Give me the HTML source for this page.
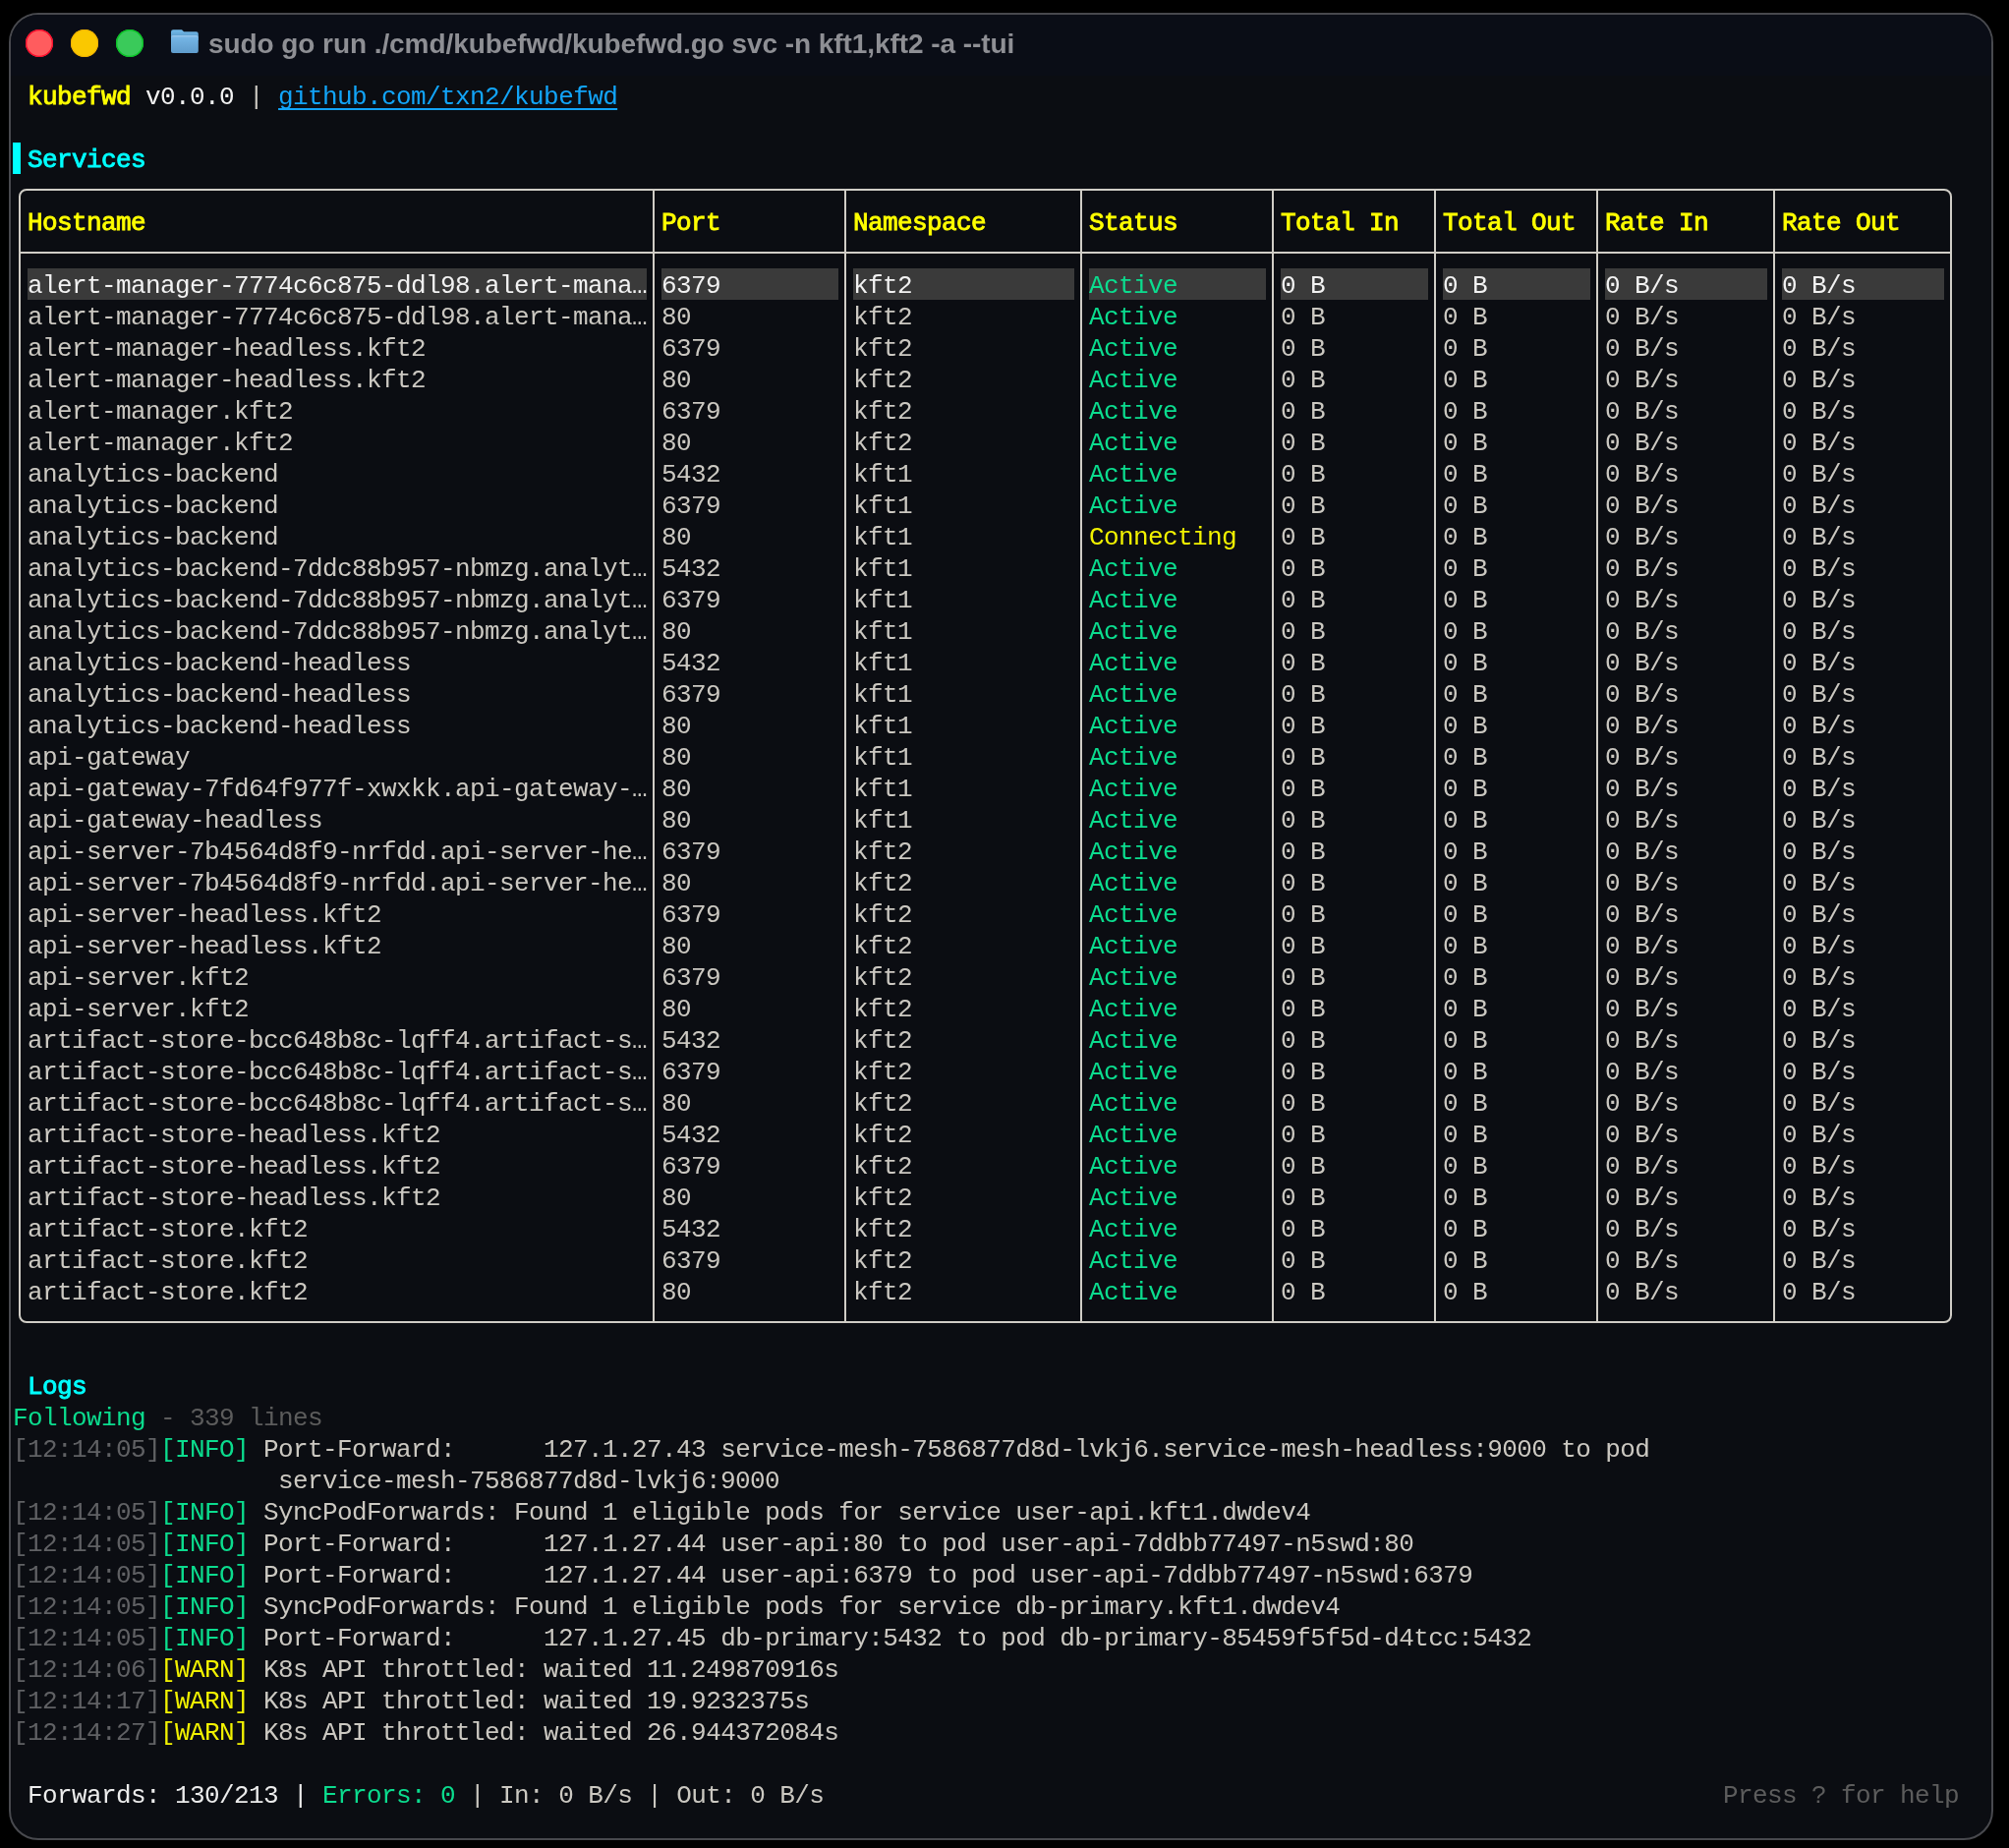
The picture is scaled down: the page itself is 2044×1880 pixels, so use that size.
<!DOCTYPE html>
<html><head><meta charset="utf-8">
<style>
html,body{margin:0;padding:0;background:#000;width:2044px;height:1880px;overflow:hidden}
#win{position:absolute;left:9px;top:13px;width:2015px;height:1855px;border:2px solid #48494e;border-radius:30px;background:#0b0d12;overflow:hidden}
#tb{position:absolute;left:0;top:0;width:100%;height:62px;background:#0a0d16}
.dot{position:absolute;width:28px;height:28px;border-radius:50%;top:15px}
#title{position:absolute;left:201px;top:15px;will-change:transform;letter-spacing:-0.07px;font-family:"Liberation Sans",sans-serif;font-weight:bold;font-size:28px;line-height:30px;color:#8e8f94;white-space:pre}
#term{position:absolute;left:-11px;top:-15px;width:2044px;height:1880px;will-change:transform}
.t{position:absolute;font-family:"Liberation Mono",monospace;font-size:26px;letter-spacing:-0.6px;line-height:32px;height:32px;white-space:pre;padding-top:2px;box-sizing:border-box;color:#cbc8c1}
.t span{}
.lnk{color:#12a4f8;text-decoration:underline;text-decoration-thickness:2px;text-underline-offset:4px;text-decoration-skip-ink:none}
.bar{position:absolute;width:8px;height:32px;background:#00ffff}
.hl{position:absolute;height:32px;background:#3a3a3a}
.box{position:absolute;border:2px solid #d0cdc6;border-radius:8px;box-sizing:content-box}
.hz{position:absolute;height:2px;background:#d0cdc6}
.vt{position:absolute;width:2px;background:#d0cdc6}
</style></head><body>
<div id="win">
<div id="tb"></div>
<div class="dot" style="left:15px;background:#ff5c5e;box-shadow:inset 0 0 0 1.3px #ff0a2a"></div>
<div class="dot" style="left:61px;background:#fac800;box-shadow:inset 0 0 0 1px #f0b000"></div>
<div class="dot" style="left:107px;background:#3aca5a;box-shadow:inset 0 0 0 1.3px #08c424"></div>
<svg style="position:absolute;left:162px;top:14px" width="30" height="26" viewBox="0 0 30 26">
<defs><linearGradient id="fg1" x1="0" y1="0" x2="0" y2="1"><stop offset="0" stop-color="#9cc8ec"/><stop offset="0.15" stop-color="#74b4e4"/><stop offset="1" stop-color="#5f9ccc"/></linearGradient>
<linearGradient id="bg1" x1="0" y1="0" x2="0" y2="1"><stop offset="0" stop-color="#74bcec"/><stop offset="1" stop-color="#4f8cba"/></linearGradient></defs>
<path d="M1 3.5 Q1 1.3 3.2 1.3 L12 1.3 L14 3.3 L26.6 3.3 Q28.8 3.3 28.8 5.5 L28.8 12 L1 12 Z" fill="url(#bg1)"/>
<path d="M1 9 Q1 7 3 7 L26.8 7 Q28.8 7 28.8 9 L28.8 23 Q28.8 25 26.8 25 L3 25 Q1 25 1 23 Z" fill="url(#fg1)"/>
</svg>
<div id="title">sudo go run ./cmd/kubefwd/kubefwd.go svc -n kft1,kft2 -a --tui</div>
<div id="term">
<div class="t" style="top:81px;left:28px"><span style="color:#ffff00;font-weight:normal;-webkit-text-stroke:0.9px #ffff00">kubefwd</span><span style="color:#f2f2f2"> v0.0.0 </span><span style="color:#cbc8c1">| </span><span class="lnk">github.com/txn2/kubefwd</span></div>
<div class="bar" style="top:145px;left:13px"></div>
<div class="t" style="top:145px;left:28px"><span style="color:#00ffff;font-weight:normal;-webkit-text-stroke:0.9px #00ffff">Services</span></div>
<div class="t" style="top:209px;left:28px"><span style="color:#ffff00;font-weight:normal;-webkit-text-stroke:0.9px #ffff00">Hostname</span></div>
<div class="t" style="top:209px;left:673px"><span style="color:#ffff00;font-weight:normal;-webkit-text-stroke:0.9px #ffff00">Port</span></div>
<div class="t" style="top:209px;left:868px"><span style="color:#ffff00;font-weight:normal;-webkit-text-stroke:0.9px #ffff00">Namespace</span></div>
<div class="t" style="top:209px;left:1108px"><span style="color:#ffff00;font-weight:normal;-webkit-text-stroke:0.9px #ffff00">Status</span></div>
<div class="t" style="top:209px;left:1303px"><span style="color:#ffff00;font-weight:normal;-webkit-text-stroke:0.9px #ffff00">Total In</span></div>
<div class="t" style="top:209px;left:1468px"><span style="color:#ffff00;font-weight:normal;-webkit-text-stroke:0.9px #ffff00">Total Out</span></div>
<div class="t" style="top:209px;left:1633px"><span style="color:#ffff00;font-weight:normal;-webkit-text-stroke:0.9px #ffff00">Rate In</span></div>
<div class="t" style="top:209px;left:1813px"><span style="color:#ffff00;font-weight:normal;-webkit-text-stroke:0.9px #ffff00">Rate Out</span></div>
<div class="hl" style="top:273px;left:28px;width:630px"></div>
<div class="t" style="top:273px;left:28px"><span style="color:#f2f2f2">alert-manager-7774c6c875-ddl98.alert-mana…</span></div>
<div class="hl" style="top:273px;left:673px;width:180px"></div>
<div class="t" style="top:273px;left:673px"><span style="color:#f2f2f2">6379</span></div>
<div class="hl" style="top:273px;left:868px;width:225px"></div>
<div class="t" style="top:273px;left:868px"><span style="color:#f2f2f2">kft2</span></div>
<div class="hl" style="top:273px;left:1108px;width:180px"></div>
<div class="t" style="top:273px;left:1108px"><span style="color:#0bdc8e">Active</span></div>
<div class="hl" style="top:273px;left:1303px;width:150px"></div>
<div class="t" style="top:273px;left:1303px"><span style="color:#f2f2f2">0 B</span></div>
<div class="hl" style="top:273px;left:1468px;width:150px"></div>
<div class="t" style="top:273px;left:1468px"><span style="color:#f2f2f2">0 B</span></div>
<div class="hl" style="top:273px;left:1633px;width:165px"></div>
<div class="t" style="top:273px;left:1633px"><span style="color:#f2f2f2">0 B/s</span></div>
<div class="hl" style="top:273px;left:1813px;width:165px"></div>
<div class="t" style="top:273px;left:1813px"><span style="color:#f2f2f2">0 B/s</span></div>
<div class="t" style="top:305px;left:28px"><span style="color:#cbc8c1">alert-manager-7774c6c875-ddl98.alert-mana…</span></div>
<div class="t" style="top:305px;left:673px"><span style="color:#cbc8c1">80</span></div>
<div class="t" style="top:305px;left:868px"><span style="color:#cbc8c1">kft2</span></div>
<div class="t" style="top:305px;left:1108px"><span style="color:#0bdc8e">Active</span></div>
<div class="t" style="top:305px;left:1303px"><span style="color:#cbc8c1">0 B</span></div>
<div class="t" style="top:305px;left:1468px"><span style="color:#cbc8c1">0 B</span></div>
<div class="t" style="top:305px;left:1633px"><span style="color:#cbc8c1">0 B/s</span></div>
<div class="t" style="top:305px;left:1813px"><span style="color:#cbc8c1">0 B/s</span></div>
<div class="t" style="top:337px;left:28px"><span style="color:#cbc8c1">alert-manager-headless.kft2</span></div>
<div class="t" style="top:337px;left:673px"><span style="color:#cbc8c1">6379</span></div>
<div class="t" style="top:337px;left:868px"><span style="color:#cbc8c1">kft2</span></div>
<div class="t" style="top:337px;left:1108px"><span style="color:#0bdc8e">Active</span></div>
<div class="t" style="top:337px;left:1303px"><span style="color:#cbc8c1">0 B</span></div>
<div class="t" style="top:337px;left:1468px"><span style="color:#cbc8c1">0 B</span></div>
<div class="t" style="top:337px;left:1633px"><span style="color:#cbc8c1">0 B/s</span></div>
<div class="t" style="top:337px;left:1813px"><span style="color:#cbc8c1">0 B/s</span></div>
<div class="t" style="top:369px;left:28px"><span style="color:#cbc8c1">alert-manager-headless.kft2</span></div>
<div class="t" style="top:369px;left:673px"><span style="color:#cbc8c1">80</span></div>
<div class="t" style="top:369px;left:868px"><span style="color:#cbc8c1">kft2</span></div>
<div class="t" style="top:369px;left:1108px"><span style="color:#0bdc8e">Active</span></div>
<div class="t" style="top:369px;left:1303px"><span style="color:#cbc8c1">0 B</span></div>
<div class="t" style="top:369px;left:1468px"><span style="color:#cbc8c1">0 B</span></div>
<div class="t" style="top:369px;left:1633px"><span style="color:#cbc8c1">0 B/s</span></div>
<div class="t" style="top:369px;left:1813px"><span style="color:#cbc8c1">0 B/s</span></div>
<div class="t" style="top:401px;left:28px"><span style="color:#cbc8c1">alert-manager.kft2</span></div>
<div class="t" style="top:401px;left:673px"><span style="color:#cbc8c1">6379</span></div>
<div class="t" style="top:401px;left:868px"><span style="color:#cbc8c1">kft2</span></div>
<div class="t" style="top:401px;left:1108px"><span style="color:#0bdc8e">Active</span></div>
<div class="t" style="top:401px;left:1303px"><span style="color:#cbc8c1">0 B</span></div>
<div class="t" style="top:401px;left:1468px"><span style="color:#cbc8c1">0 B</span></div>
<div class="t" style="top:401px;left:1633px"><span style="color:#cbc8c1">0 B/s</span></div>
<div class="t" style="top:401px;left:1813px"><span style="color:#cbc8c1">0 B/s</span></div>
<div class="t" style="top:433px;left:28px"><span style="color:#cbc8c1">alert-manager.kft2</span></div>
<div class="t" style="top:433px;left:673px"><span style="color:#cbc8c1">80</span></div>
<div class="t" style="top:433px;left:868px"><span style="color:#cbc8c1">kft2</span></div>
<div class="t" style="top:433px;left:1108px"><span style="color:#0bdc8e">Active</span></div>
<div class="t" style="top:433px;left:1303px"><span style="color:#cbc8c1">0 B</span></div>
<div class="t" style="top:433px;left:1468px"><span style="color:#cbc8c1">0 B</span></div>
<div class="t" style="top:433px;left:1633px"><span style="color:#cbc8c1">0 B/s</span></div>
<div class="t" style="top:433px;left:1813px"><span style="color:#cbc8c1">0 B/s</span></div>
<div class="t" style="top:465px;left:28px"><span style="color:#cbc8c1">analytics-backend</span></div>
<div class="t" style="top:465px;left:673px"><span style="color:#cbc8c1">5432</span></div>
<div class="t" style="top:465px;left:868px"><span style="color:#cbc8c1">kft1</span></div>
<div class="t" style="top:465px;left:1108px"><span style="color:#0bdc8e">Active</span></div>
<div class="t" style="top:465px;left:1303px"><span style="color:#cbc8c1">0 B</span></div>
<div class="t" style="top:465px;left:1468px"><span style="color:#cbc8c1">0 B</span></div>
<div class="t" style="top:465px;left:1633px"><span style="color:#cbc8c1">0 B/s</span></div>
<div class="t" style="top:465px;left:1813px"><span style="color:#cbc8c1">0 B/s</span></div>
<div class="t" style="top:497px;left:28px"><span style="color:#cbc8c1">analytics-backend</span></div>
<div class="t" style="top:497px;left:673px"><span style="color:#cbc8c1">6379</span></div>
<div class="t" style="top:497px;left:868px"><span style="color:#cbc8c1">kft1</span></div>
<div class="t" style="top:497px;left:1108px"><span style="color:#0bdc8e">Active</span></div>
<div class="t" style="top:497px;left:1303px"><span style="color:#cbc8c1">0 B</span></div>
<div class="t" style="top:497px;left:1468px"><span style="color:#cbc8c1">0 B</span></div>
<div class="t" style="top:497px;left:1633px"><span style="color:#cbc8c1">0 B/s</span></div>
<div class="t" style="top:497px;left:1813px"><span style="color:#cbc8c1">0 B/s</span></div>
<div class="t" style="top:529px;left:28px"><span style="color:#cbc8c1">analytics-backend</span></div>
<div class="t" style="top:529px;left:673px"><span style="color:#cbc8c1">80</span></div>
<div class="t" style="top:529px;left:868px"><span style="color:#cbc8c1">kft1</span></div>
<div class="t" style="top:529px;left:1108px"><span style="color:#f2f200">Connecting</span></div>
<div class="t" style="top:529px;left:1303px"><span style="color:#cbc8c1">0 B</span></div>
<div class="t" style="top:529px;left:1468px"><span style="color:#cbc8c1">0 B</span></div>
<div class="t" style="top:529px;left:1633px"><span style="color:#cbc8c1">0 B/s</span></div>
<div class="t" style="top:529px;left:1813px"><span style="color:#cbc8c1">0 B/s</span></div>
<div class="t" style="top:561px;left:28px"><span style="color:#cbc8c1">analytics-backend-7ddc88b957-nbmzg.analyt…</span></div>
<div class="t" style="top:561px;left:673px"><span style="color:#cbc8c1">5432</span></div>
<div class="t" style="top:561px;left:868px"><span style="color:#cbc8c1">kft1</span></div>
<div class="t" style="top:561px;left:1108px"><span style="color:#0bdc8e">Active</span></div>
<div class="t" style="top:561px;left:1303px"><span style="color:#cbc8c1">0 B</span></div>
<div class="t" style="top:561px;left:1468px"><span style="color:#cbc8c1">0 B</span></div>
<div class="t" style="top:561px;left:1633px"><span style="color:#cbc8c1">0 B/s</span></div>
<div class="t" style="top:561px;left:1813px"><span style="color:#cbc8c1">0 B/s</span></div>
<div class="t" style="top:593px;left:28px"><span style="color:#cbc8c1">analytics-backend-7ddc88b957-nbmzg.analyt…</span></div>
<div class="t" style="top:593px;left:673px"><span style="color:#cbc8c1">6379</span></div>
<div class="t" style="top:593px;left:868px"><span style="color:#cbc8c1">kft1</span></div>
<div class="t" style="top:593px;left:1108px"><span style="color:#0bdc8e">Active</span></div>
<div class="t" style="top:593px;left:1303px"><span style="color:#cbc8c1">0 B</span></div>
<div class="t" style="top:593px;left:1468px"><span style="color:#cbc8c1">0 B</span></div>
<div class="t" style="top:593px;left:1633px"><span style="color:#cbc8c1">0 B/s</span></div>
<div class="t" style="top:593px;left:1813px"><span style="color:#cbc8c1">0 B/s</span></div>
<div class="t" style="top:625px;left:28px"><span style="color:#cbc8c1">analytics-backend-7ddc88b957-nbmzg.analyt…</span></div>
<div class="t" style="top:625px;left:673px"><span style="color:#cbc8c1">80</span></div>
<div class="t" style="top:625px;left:868px"><span style="color:#cbc8c1">kft1</span></div>
<div class="t" style="top:625px;left:1108px"><span style="color:#0bdc8e">Active</span></div>
<div class="t" style="top:625px;left:1303px"><span style="color:#cbc8c1">0 B</span></div>
<div class="t" style="top:625px;left:1468px"><span style="color:#cbc8c1">0 B</span></div>
<div class="t" style="top:625px;left:1633px"><span style="color:#cbc8c1">0 B/s</span></div>
<div class="t" style="top:625px;left:1813px"><span style="color:#cbc8c1">0 B/s</span></div>
<div class="t" style="top:657px;left:28px"><span style="color:#cbc8c1">analytics-backend-headless</span></div>
<div class="t" style="top:657px;left:673px"><span style="color:#cbc8c1">5432</span></div>
<div class="t" style="top:657px;left:868px"><span style="color:#cbc8c1">kft1</span></div>
<div class="t" style="top:657px;left:1108px"><span style="color:#0bdc8e">Active</span></div>
<div class="t" style="top:657px;left:1303px"><span style="color:#cbc8c1">0 B</span></div>
<div class="t" style="top:657px;left:1468px"><span style="color:#cbc8c1">0 B</span></div>
<div class="t" style="top:657px;left:1633px"><span style="color:#cbc8c1">0 B/s</span></div>
<div class="t" style="top:657px;left:1813px"><span style="color:#cbc8c1">0 B/s</span></div>
<div class="t" style="top:689px;left:28px"><span style="color:#cbc8c1">analytics-backend-headless</span></div>
<div class="t" style="top:689px;left:673px"><span style="color:#cbc8c1">6379</span></div>
<div class="t" style="top:689px;left:868px"><span style="color:#cbc8c1">kft1</span></div>
<div class="t" style="top:689px;left:1108px"><span style="color:#0bdc8e">Active</span></div>
<div class="t" style="top:689px;left:1303px"><span style="color:#cbc8c1">0 B</span></div>
<div class="t" style="top:689px;left:1468px"><span style="color:#cbc8c1">0 B</span></div>
<div class="t" style="top:689px;left:1633px"><span style="color:#cbc8c1">0 B/s</span></div>
<div class="t" style="top:689px;left:1813px"><span style="color:#cbc8c1">0 B/s</span></div>
<div class="t" style="top:721px;left:28px"><span style="color:#cbc8c1">analytics-backend-headless</span></div>
<div class="t" style="top:721px;left:673px"><span style="color:#cbc8c1">80</span></div>
<div class="t" style="top:721px;left:868px"><span style="color:#cbc8c1">kft1</span></div>
<div class="t" style="top:721px;left:1108px"><span style="color:#0bdc8e">Active</span></div>
<div class="t" style="top:721px;left:1303px"><span style="color:#cbc8c1">0 B</span></div>
<div class="t" style="top:721px;left:1468px"><span style="color:#cbc8c1">0 B</span></div>
<div class="t" style="top:721px;left:1633px"><span style="color:#cbc8c1">0 B/s</span></div>
<div class="t" style="top:721px;left:1813px"><span style="color:#cbc8c1">0 B/s</span></div>
<div class="t" style="top:753px;left:28px"><span style="color:#cbc8c1">api-gateway</span></div>
<div class="t" style="top:753px;left:673px"><span style="color:#cbc8c1">80</span></div>
<div class="t" style="top:753px;left:868px"><span style="color:#cbc8c1">kft1</span></div>
<div class="t" style="top:753px;left:1108px"><span style="color:#0bdc8e">Active</span></div>
<div class="t" style="top:753px;left:1303px"><span style="color:#cbc8c1">0 B</span></div>
<div class="t" style="top:753px;left:1468px"><span style="color:#cbc8c1">0 B</span></div>
<div class="t" style="top:753px;left:1633px"><span style="color:#cbc8c1">0 B/s</span></div>
<div class="t" style="top:753px;left:1813px"><span style="color:#cbc8c1">0 B/s</span></div>
<div class="t" style="top:785px;left:28px"><span style="color:#cbc8c1">api-gateway-7fd64f977f-xwxkk.api-gateway-…</span></div>
<div class="t" style="top:785px;left:673px"><span style="color:#cbc8c1">80</span></div>
<div class="t" style="top:785px;left:868px"><span style="color:#cbc8c1">kft1</span></div>
<div class="t" style="top:785px;left:1108px"><span style="color:#0bdc8e">Active</span></div>
<div class="t" style="top:785px;left:1303px"><span style="color:#cbc8c1">0 B</span></div>
<div class="t" style="top:785px;left:1468px"><span style="color:#cbc8c1">0 B</span></div>
<div class="t" style="top:785px;left:1633px"><span style="color:#cbc8c1">0 B/s</span></div>
<div class="t" style="top:785px;left:1813px"><span style="color:#cbc8c1">0 B/s</span></div>
<div class="t" style="top:817px;left:28px"><span style="color:#cbc8c1">api-gateway-headless</span></div>
<div class="t" style="top:817px;left:673px"><span style="color:#cbc8c1">80</span></div>
<div class="t" style="top:817px;left:868px"><span style="color:#cbc8c1">kft1</span></div>
<div class="t" style="top:817px;left:1108px"><span style="color:#0bdc8e">Active</span></div>
<div class="t" style="top:817px;left:1303px"><span style="color:#cbc8c1">0 B</span></div>
<div class="t" style="top:817px;left:1468px"><span style="color:#cbc8c1">0 B</span></div>
<div class="t" style="top:817px;left:1633px"><span style="color:#cbc8c1">0 B/s</span></div>
<div class="t" style="top:817px;left:1813px"><span style="color:#cbc8c1">0 B/s</span></div>
<div class="t" style="top:849px;left:28px"><span style="color:#cbc8c1">api-server-7b4564d8f9-nrfdd.api-server-he…</span></div>
<div class="t" style="top:849px;left:673px"><span style="color:#cbc8c1">6379</span></div>
<div class="t" style="top:849px;left:868px"><span style="color:#cbc8c1">kft2</span></div>
<div class="t" style="top:849px;left:1108px"><span style="color:#0bdc8e">Active</span></div>
<div class="t" style="top:849px;left:1303px"><span style="color:#cbc8c1">0 B</span></div>
<div class="t" style="top:849px;left:1468px"><span style="color:#cbc8c1">0 B</span></div>
<div class="t" style="top:849px;left:1633px"><span style="color:#cbc8c1">0 B/s</span></div>
<div class="t" style="top:849px;left:1813px"><span style="color:#cbc8c1">0 B/s</span></div>
<div class="t" style="top:881px;left:28px"><span style="color:#cbc8c1">api-server-7b4564d8f9-nrfdd.api-server-he…</span></div>
<div class="t" style="top:881px;left:673px"><span style="color:#cbc8c1">80</span></div>
<div class="t" style="top:881px;left:868px"><span style="color:#cbc8c1">kft2</span></div>
<div class="t" style="top:881px;left:1108px"><span style="color:#0bdc8e">Active</span></div>
<div class="t" style="top:881px;left:1303px"><span style="color:#cbc8c1">0 B</span></div>
<div class="t" style="top:881px;left:1468px"><span style="color:#cbc8c1">0 B</span></div>
<div class="t" style="top:881px;left:1633px"><span style="color:#cbc8c1">0 B/s</span></div>
<div class="t" style="top:881px;left:1813px"><span style="color:#cbc8c1">0 B/s</span></div>
<div class="t" style="top:913px;left:28px"><span style="color:#cbc8c1">api-server-headless.kft2</span></div>
<div class="t" style="top:913px;left:673px"><span style="color:#cbc8c1">6379</span></div>
<div class="t" style="top:913px;left:868px"><span style="color:#cbc8c1">kft2</span></div>
<div class="t" style="top:913px;left:1108px"><span style="color:#0bdc8e">Active</span></div>
<div class="t" style="top:913px;left:1303px"><span style="color:#cbc8c1">0 B</span></div>
<div class="t" style="top:913px;left:1468px"><span style="color:#cbc8c1">0 B</span></div>
<div class="t" style="top:913px;left:1633px"><span style="color:#cbc8c1">0 B/s</span></div>
<div class="t" style="top:913px;left:1813px"><span style="color:#cbc8c1">0 B/s</span></div>
<div class="t" style="top:945px;left:28px"><span style="color:#cbc8c1">api-server-headless.kft2</span></div>
<div class="t" style="top:945px;left:673px"><span style="color:#cbc8c1">80</span></div>
<div class="t" style="top:945px;left:868px"><span style="color:#cbc8c1">kft2</span></div>
<div class="t" style="top:945px;left:1108px"><span style="color:#0bdc8e">Active</span></div>
<div class="t" style="top:945px;left:1303px"><span style="color:#cbc8c1">0 B</span></div>
<div class="t" style="top:945px;left:1468px"><span style="color:#cbc8c1">0 B</span></div>
<div class="t" style="top:945px;left:1633px"><span style="color:#cbc8c1">0 B/s</span></div>
<div class="t" style="top:945px;left:1813px"><span style="color:#cbc8c1">0 B/s</span></div>
<div class="t" style="top:977px;left:28px"><span style="color:#cbc8c1">api-server.kft2</span></div>
<div class="t" style="top:977px;left:673px"><span style="color:#cbc8c1">6379</span></div>
<div class="t" style="top:977px;left:868px"><span style="color:#cbc8c1">kft2</span></div>
<div class="t" style="top:977px;left:1108px"><span style="color:#0bdc8e">Active</span></div>
<div class="t" style="top:977px;left:1303px"><span style="color:#cbc8c1">0 B</span></div>
<div class="t" style="top:977px;left:1468px"><span style="color:#cbc8c1">0 B</span></div>
<div class="t" style="top:977px;left:1633px"><span style="color:#cbc8c1">0 B/s</span></div>
<div class="t" style="top:977px;left:1813px"><span style="color:#cbc8c1">0 B/s</span></div>
<div class="t" style="top:1009px;left:28px"><span style="color:#cbc8c1">api-server.kft2</span></div>
<div class="t" style="top:1009px;left:673px"><span style="color:#cbc8c1">80</span></div>
<div class="t" style="top:1009px;left:868px"><span style="color:#cbc8c1">kft2</span></div>
<div class="t" style="top:1009px;left:1108px"><span style="color:#0bdc8e">Active</span></div>
<div class="t" style="top:1009px;left:1303px"><span style="color:#cbc8c1">0 B</span></div>
<div class="t" style="top:1009px;left:1468px"><span style="color:#cbc8c1">0 B</span></div>
<div class="t" style="top:1009px;left:1633px"><span style="color:#cbc8c1">0 B/s</span></div>
<div class="t" style="top:1009px;left:1813px"><span style="color:#cbc8c1">0 B/s</span></div>
<div class="t" style="top:1041px;left:28px"><span style="color:#cbc8c1">artifact-store-bcc648b8c-lqff4.artifact-s…</span></div>
<div class="t" style="top:1041px;left:673px"><span style="color:#cbc8c1">5432</span></div>
<div class="t" style="top:1041px;left:868px"><span style="color:#cbc8c1">kft2</span></div>
<div class="t" style="top:1041px;left:1108px"><span style="color:#0bdc8e">Active</span></div>
<div class="t" style="top:1041px;left:1303px"><span style="color:#cbc8c1">0 B</span></div>
<div class="t" style="top:1041px;left:1468px"><span style="color:#cbc8c1">0 B</span></div>
<div class="t" style="top:1041px;left:1633px"><span style="color:#cbc8c1">0 B/s</span></div>
<div class="t" style="top:1041px;left:1813px"><span style="color:#cbc8c1">0 B/s</span></div>
<div class="t" style="top:1073px;left:28px"><span style="color:#cbc8c1">artifact-store-bcc648b8c-lqff4.artifact-s…</span></div>
<div class="t" style="top:1073px;left:673px"><span style="color:#cbc8c1">6379</span></div>
<div class="t" style="top:1073px;left:868px"><span style="color:#cbc8c1">kft2</span></div>
<div class="t" style="top:1073px;left:1108px"><span style="color:#0bdc8e">Active</span></div>
<div class="t" style="top:1073px;left:1303px"><span style="color:#cbc8c1">0 B</span></div>
<div class="t" style="top:1073px;left:1468px"><span style="color:#cbc8c1">0 B</span></div>
<div class="t" style="top:1073px;left:1633px"><span style="color:#cbc8c1">0 B/s</span></div>
<div class="t" style="top:1073px;left:1813px"><span style="color:#cbc8c1">0 B/s</span></div>
<div class="t" style="top:1105px;left:28px"><span style="color:#cbc8c1">artifact-store-bcc648b8c-lqff4.artifact-s…</span></div>
<div class="t" style="top:1105px;left:673px"><span style="color:#cbc8c1">80</span></div>
<div class="t" style="top:1105px;left:868px"><span style="color:#cbc8c1">kft2</span></div>
<div class="t" style="top:1105px;left:1108px"><span style="color:#0bdc8e">Active</span></div>
<div class="t" style="top:1105px;left:1303px"><span style="color:#cbc8c1">0 B</span></div>
<div class="t" style="top:1105px;left:1468px"><span style="color:#cbc8c1">0 B</span></div>
<div class="t" style="top:1105px;left:1633px"><span style="color:#cbc8c1">0 B/s</span></div>
<div class="t" style="top:1105px;left:1813px"><span style="color:#cbc8c1">0 B/s</span></div>
<div class="t" style="top:1137px;left:28px"><span style="color:#cbc8c1">artifact-store-headless.kft2</span></div>
<div class="t" style="top:1137px;left:673px"><span style="color:#cbc8c1">5432</span></div>
<div class="t" style="top:1137px;left:868px"><span style="color:#cbc8c1">kft2</span></div>
<div class="t" style="top:1137px;left:1108px"><span style="color:#0bdc8e">Active</span></div>
<div class="t" style="top:1137px;left:1303px"><span style="color:#cbc8c1">0 B</span></div>
<div class="t" style="top:1137px;left:1468px"><span style="color:#cbc8c1">0 B</span></div>
<div class="t" style="top:1137px;left:1633px"><span style="color:#cbc8c1">0 B/s</span></div>
<div class="t" style="top:1137px;left:1813px"><span style="color:#cbc8c1">0 B/s</span></div>
<div class="t" style="top:1169px;left:28px"><span style="color:#cbc8c1">artifact-store-headless.kft2</span></div>
<div class="t" style="top:1169px;left:673px"><span style="color:#cbc8c1">6379</span></div>
<div class="t" style="top:1169px;left:868px"><span style="color:#cbc8c1">kft2</span></div>
<div class="t" style="top:1169px;left:1108px"><span style="color:#0bdc8e">Active</span></div>
<div class="t" style="top:1169px;left:1303px"><span style="color:#cbc8c1">0 B</span></div>
<div class="t" style="top:1169px;left:1468px"><span style="color:#cbc8c1">0 B</span></div>
<div class="t" style="top:1169px;left:1633px"><span style="color:#cbc8c1">0 B/s</span></div>
<div class="t" style="top:1169px;left:1813px"><span style="color:#cbc8c1">0 B/s</span></div>
<div class="t" style="top:1201px;left:28px"><span style="color:#cbc8c1">artifact-store-headless.kft2</span></div>
<div class="t" style="top:1201px;left:673px"><span style="color:#cbc8c1">80</span></div>
<div class="t" style="top:1201px;left:868px"><span style="color:#cbc8c1">kft2</span></div>
<div class="t" style="top:1201px;left:1108px"><span style="color:#0bdc8e">Active</span></div>
<div class="t" style="top:1201px;left:1303px"><span style="color:#cbc8c1">0 B</span></div>
<div class="t" style="top:1201px;left:1468px"><span style="color:#cbc8c1">0 B</span></div>
<div class="t" style="top:1201px;left:1633px"><span style="color:#cbc8c1">0 B/s</span></div>
<div class="t" style="top:1201px;left:1813px"><span style="color:#cbc8c1">0 B/s</span></div>
<div class="t" style="top:1233px;left:28px"><span style="color:#cbc8c1">artifact-store.kft2</span></div>
<div class="t" style="top:1233px;left:673px"><span style="color:#cbc8c1">5432</span></div>
<div class="t" style="top:1233px;left:868px"><span style="color:#cbc8c1">kft2</span></div>
<div class="t" style="top:1233px;left:1108px"><span style="color:#0bdc8e">Active</span></div>
<div class="t" style="top:1233px;left:1303px"><span style="color:#cbc8c1">0 B</span></div>
<div class="t" style="top:1233px;left:1468px"><span style="color:#cbc8c1">0 B</span></div>
<div class="t" style="top:1233px;left:1633px"><span style="color:#cbc8c1">0 B/s</span></div>
<div class="t" style="top:1233px;left:1813px"><span style="color:#cbc8c1">0 B/s</span></div>
<div class="t" style="top:1265px;left:28px"><span style="color:#cbc8c1">artifact-store.kft2</span></div>
<div class="t" style="top:1265px;left:673px"><span style="color:#cbc8c1">6379</span></div>
<div class="t" style="top:1265px;left:868px"><span style="color:#cbc8c1">kft2</span></div>
<div class="t" style="top:1265px;left:1108px"><span style="color:#0bdc8e">Active</span></div>
<div class="t" style="top:1265px;left:1303px"><span style="color:#cbc8c1">0 B</span></div>
<div class="t" style="top:1265px;left:1468px"><span style="color:#cbc8c1">0 B</span></div>
<div class="t" style="top:1265px;left:1633px"><span style="color:#cbc8c1">0 B/s</span></div>
<div class="t" style="top:1265px;left:1813px"><span style="color:#cbc8c1">0 B/s</span></div>
<div class="t" style="top:1297px;left:28px"><span style="color:#cbc8c1">artifact-store.kft2</span></div>
<div class="t" style="top:1297px;left:673px"><span style="color:#cbc8c1">80</span></div>
<div class="t" style="top:1297px;left:868px"><span style="color:#cbc8c1">kft2</span></div>
<div class="t" style="top:1297px;left:1108px"><span style="color:#0bdc8e">Active</span></div>
<div class="t" style="top:1297px;left:1303px"><span style="color:#cbc8c1">0 B</span></div>
<div class="t" style="top:1297px;left:1468px"><span style="color:#cbc8c1">0 B</span></div>
<div class="t" style="top:1297px;left:1633px"><span style="color:#cbc8c1">0 B/s</span></div>
<div class="t" style="top:1297px;left:1813px"><span style="color:#cbc8c1">0 B/s</span></div>
<div class="box" style="left:19px;top:192px;width:1963px;height:1150px"></div>
<div class="hz" style="left:19px;top:256px;width:1967px"></div>
<div class="vt" style="left:664px;top:192px;height:1154px"></div>
<div class="vt" style="left:859px;top:192px;height:1154px"></div>
<div class="vt" style="left:1099px;top:192px;height:1154px"></div>
<div class="vt" style="left:1294px;top:192px;height:1154px"></div>
<div class="vt" style="left:1459px;top:192px;height:1154px"></div>
<div class="vt" style="left:1624px;top:192px;height:1154px"></div>
<div class="vt" style="left:1804px;top:192px;height:1154px"></div>
<div class="t" style="top:1393px;left:28px"><span style="color:#00ffff;font-weight:normal;-webkit-text-stroke:0.9px #00ffff">Logs</span></div>
<div class="t" style="top:1425px;left:13px"><span style="color:#0bdc8e">Following</span><span style="color:#5c5c5c"> - 339 lines</span></div>
<div class="t" style="top:1457px;left:13px"><span style="color:#606164">[12:14:05]</span><span style="color:#0bdc8e">[INFO]</span><span style="color:#cbc8c1"> Port-Forward:      127.1.27.43 service-mesh-7586877d8d-lvkj6.service-mesh-headless:9000 to pod</span></div>
<div class="t" style="top:1489px;left:283px"><span style="color:#cbc8c1">service-mesh-7586877d8d-lvkj6:9000</span></div>
<div class="t" style="top:1521px;left:13px"><span style="color:#606164">[12:14:05]</span><span style="color:#0bdc8e">[INFO]</span><span style="color:#cbc8c1"> SyncPodForwards: Found 1 eligible pods for service user-api.kft1.dwdev4</span></div>
<div class="t" style="top:1553px;left:13px"><span style="color:#606164">[12:14:05]</span><span style="color:#0bdc8e">[INFO]</span><span style="color:#cbc8c1"> Port-Forward:      127.1.27.44 user-api:80 to pod user-api-7ddbb77497-n5swd:80</span></div>
<div class="t" style="top:1585px;left:13px"><span style="color:#606164">[12:14:05]</span><span style="color:#0bdc8e">[INFO]</span><span style="color:#cbc8c1"> Port-Forward:      127.1.27.44 user-api:6379 to pod user-api-7ddbb77497-n5swd:6379</span></div>
<div class="t" style="top:1617px;left:13px"><span style="color:#606164">[12:14:05]</span><span style="color:#0bdc8e">[INFO]</span><span style="color:#cbc8c1"> SyncPodForwards: Found 1 eligible pods for service db-primary.kft1.dwdev4</span></div>
<div class="t" style="top:1649px;left:13px"><span style="color:#606164">[12:14:05]</span><span style="color:#0bdc8e">[INFO]</span><span style="color:#cbc8c1"> Port-Forward:      127.1.27.45 db-primary:5432 to pod db-primary-85459f5f5d-d4tcc:5432</span></div>
<div class="t" style="top:1681px;left:13px"><span style="color:#606164">[12:14:06]</span><span style="color:#f2f200">[WARN]</span><span style="color:#cbc8c1"> K8s API throttled: waited 11.249870916s</span></div>
<div class="t" style="top:1713px;left:13px"><span style="color:#606164">[12:14:17]</span><span style="color:#f2f200">[WARN]</span><span style="color:#cbc8c1"> K8s API throttled: waited 19.9232375s</span></div>
<div class="t" style="top:1745px;left:13px"><span style="color:#606164">[12:14:27]</span><span style="color:#f2f200">[WARN]</span><span style="color:#cbc8c1"> K8s API throttled: waited 26.944372084s</span></div>
<div class="t" style="top:1809px;left:28px"><span style="color:#ececec">Forwards: 130/213 |</span><span style="color:#cbc8c1"> </span><span style="color:#0bdc8e">Errors: 0</span><span style="color:#cbc8c1"> | In: 0 B/s | Out: 0 B/s</span></div>
<div class="t" style="top:1809px;left:1753px"><span style="color:#5c5c5c">Press ? for help</span></div>
</div>
</div>
</body></html>
